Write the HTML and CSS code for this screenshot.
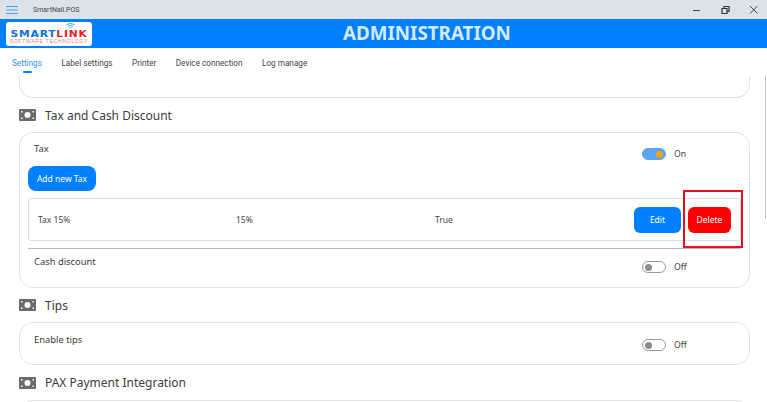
FILE: index.html
```html
<!DOCTYPE html>
<html lang="en">
<head>
<meta charset="utf-8">
<title>SmartNail.POS</title>
<link rel="stylesheet" href="styles.css">
</head>
<body>
<div class="app">
  <div class="titlebar">
    <svg class="menu-icon" width="14" height="10" viewBox="0 0 14 10"><path d="M1 1.500h12M1 5h12M1 8.500h12" stroke="#4d9fec" stroke-width="1.100" fill="none"/></svg>
    <span class="app-name">SmartNail.POS</span>
    <div class="win-controls">
      <svg width="10" height="10" viewBox="0 0 10 10"><path d="M0 5.500h7" stroke="#444" stroke-width="1" fill="none"/></svg>
      <svg width="10" height="10" viewBox="0 0 10 10"><path d="M1 3.500h5v5h-5zM3 3V1.500h5v5H6.500" stroke="#333" stroke-width="1.200" fill="none"/></svg>
      <svg width="10" height="10" viewBox="0 0 10 10"><path d="M1 1l7.500 7.500M8.500 1L1 8.500" stroke="#444" stroke-width="1" fill="none"/></svg>
    </div>
  </div>
  <header class="header">
    <div class="logo">
      <svg class="logo-wifi" width="9" height="6" viewBox="0 0 9 6"><path d="M0.500 1.500Q4.500 -0.500 8.500 1.500M2 3.200Q4.500 1.800 7 3.200M3.500 4.800Q4.500 4.200 5.500 4.800" stroke="#35a4e8" stroke-width="1" fill="none"/></svg>
      <div class="logo-main"><span class="logo-blue">SMART</span><span class="logo-red">LINK</span></div>
      <div class="logo-sub">SOFTWARE TECHNOLOGY</div>
    </div>
    <h1 class="header-title">ADMINISTRATION</h1>
  </header>
  <nav class="tabs">
    <a class="tab active">Settings</a>
    <a class="tab">Label settings</a>
    <a class="tab">Printer</a>
    <a class="tab">Device connection</a>
    <a class="tab">Log manage</a>
  </nav>
  <main class="content">
    <div class="card card-cut"></div>

    <div class="section-head">
      <svg class="money" width="17" height="12" viewBox="0 0 17 12"><path fill-rule="evenodd" fill="#6b6b6b" d="M1 0h15a1 1 0 0 1 1 1v10a1 1 0 0 1-1 1H1a1 1 0 0 1-1-1V1a1 1 0 0 1 1-1zM8.500 3a3 3 0 1 0 0 6a3 3 0 0 0 0-6zM2 2v1.500h1.500V2zM13.500 2v1.500H15V2zM2 8.500V10h1.500V8.500zM13.500 8.500V10H15V8.500z"/></svg>
      <h2 class="section-title">Tax and Cash Discount</h2>
    </div>
    <section class="card card-tax">
      <div class="setting-row tax-row">
        <span class="setting-label">Tax</span>
        <div class="toggle-wrap"><span class="toggle on"><i class="knob"></i></span><span class="toggle-text">On</span></div>
      </div>
      <button class="btn btn-blue btn-add">Add new Tax</button>
      <div class="tax-item">
        <span class="col col-name">Tax 15%</span>
        <span class="col col-rate">15%</span>
        <span class="col col-flag">True</span>
        <button class="btn btn-blue btn-edit">Edit</button>
        <button class="btn btn-red btn-delete">Delete</button>
      </div>
      <hr class="divider">
      <div class="setting-row cash-row">
        <span class="setting-label">Cash discount</span>
        <div class="toggle-wrap"><span class="toggle"><i class="knob"></i></span><span class="toggle-text">Off</span></div>
      </div>
    </section>

    <div class="section-head">
      <svg class="money" width="17" height="12" viewBox="0 0 17 12"><path fill-rule="evenodd" fill="#6b6b6b" d="M1 0h15a1 1 0 0 1 1 1v10a1 1 0 0 1-1 1H1a1 1 0 0 1-1-1V1a1 1 0 0 1 1-1zM8.500 3a3 3 0 1 0 0 6a3 3 0 0 0 0-6zM2 2v1.500h1.500V2zM13.500 2v1.500H15V2zM2 8.500V10h1.500V8.500zM13.500 8.500V10H15V8.500z"/></svg>
      <h2 class="section-title">Tips</h2>
    </div>
    <section class="card card-tips">
      <div class="setting-row tips-row">
        <span class="setting-label">Enable tips</span>
        <div class="toggle-wrap"><span class="toggle"><i class="knob"></i></span><span class="toggle-text">Off</span></div>
      </div>
    </section>

    <div class="section-head section-head-tall">
      <svg class="money" width="17" height="12" viewBox="0 0 17 12"><path fill-rule="evenodd" fill="#6b6b6b" d="M1 0h15a1 1 0 0 1 1 1v10a1 1 0 0 1-1 1H1a1 1 0 0 1-1-1V1a1 1 0 0 1 1-1zM8.500 3a3 3 0 1 0 0 6a3 3 0 0 0 0-6zM2 2v1.500h1.500V2zM13.500 2v1.500H15V2zM2 8.500V10h1.500V8.500zM13.500 8.500V10H15V8.500z"/></svg>
      <h2 class="section-title">PAX Payment Integration</h2>
    </div>
    <section class="card card-pax"></section>

    <div class="scroll-thumb"></div>
    <div class="highlight"></div>
  </main>
</div>
</body>
</html>
```
FILE: styles.css
```css
* { box-sizing: border-box; }
html, body { margin: 0; height: 100%; overflow: hidden; background: #fff; }
body { font-family: "Noto Sans", "Open Sans", sans-serif; color: #3c3c3c; }
.app { display: flex; flex-direction: column; height: 402px; width: 767px; }

.titlebar { height: 19px; flex: none; display: flex; align-items: center; background: #dbe3e9; padding-left: 5px; }
.menu-icon { flex: none; }
.app-name { font-family: Roboto, sans-serif; font-size: 7px; margin-left: 14px; color: #444; }
.win-controls { margin-left: auto; display: flex; align-items: center; gap: 18px; padding-right: 8px; }

.header { height: 29px; flex: none; background: #0080ff; display: flex; align-items: center; padding-left: 6px; }
.logo { flex: none; width: 86px; height: 24px; background: #fff; border-radius: 3px; position: relative; display: flex; flex-direction: column; align-items: center; padding-top: 7px; }
.logo-wifi { position: absolute; top: 1px; left: 60px; }
.logo-main { font-family: "DejaVu Sans", sans-serif; font-weight: 700; font-size: 9.500px; line-height: 9px; letter-spacing: .7px; transform: scaleX(1.130); }
.logo-blue { color: #0a73d9; }
.logo-red { color: #ee1c25; }
.logo-sub { font-family: "Liberation Sans", sans-serif; font-size: 5px; line-height: 6px; letter-spacing: .75px; color: #ee7a80; }
.header-title { flex: 1; margin: 0; padding-right: 5px; text-align: center; font-size: 18.800px; line-height: 29px; font-weight: 700; color: #d6eaff; }

.tabs { height: 28px; flex: none; display: flex; gap: 19.500px; padding: 0 0 0 12px; align-items: flex-start; position: relative; z-index: 1; background: #fff; }
.tab { font-family: Roboto, sans-serif; position: relative; font-size: 8.200px; line-height: 12px; padding-top: 9px; color: #444; }
.tab.active { color: #2f8fee; }
.tab.active::after { content: ""; position: absolute; left: 11px; top: 23px; width: 9px; height: 2px; background: #0080ff; border-radius: 1px; }

.content { flex: 1; min-height: 0; overflow: hidden; position: relative; padding: 0 17px 0 19px; }
.card { border: 1px solid #e2e2e2; border-radius: 14px; background: #fff; }
.card-cut { height: 22px; border-top: 0; border-top-left-radius: 0; border-top-right-radius: 0; }
.section-head { display: flex; align-items: center; gap: 9px; height: 34px; }
.section-head-tall { height: 35px; }
.section-head .money { flex: none; }
.section-title { margin: 0; font-size: 12px; font-weight: 400; color: #3c3c3c; }

.card-tax { height: 156px; padding: 0 8px; }
.card-tips { height: 43px; padding: 0 8px; }
.card-pax { height: 40px; }

.setting-row { display: flex; justify-content: space-between; padding-left: 6px; }
.setting-label { font-size: 9.400px; line-height: 13px; color: #3c3c3c; }
.tax-row { height: 33px; padding-top: 9px; }
.cash-row { padding-top: 6px; }
.tips-row { padding-top: 10px; }

.toggle-wrap { display: flex; align-items: center; gap: 8px; width: 99px; height: 12px; }
.tax-row .toggle-wrap { margin-top: 6px; }
.cash-row .toggle-wrap { margin-top: 6px; }
.tips-row .toggle-wrap { margin-top: 6px; }
.toggle { width: 24px; height: 12px; flex: none; border-radius: 6px; border: 1px solid #9a9a9a; background: #fff; display: flex; align-items: center; padding: 0 2px; }
.toggle .knob { width: 7px; height: 7px; border-radius: 50%; background: #8d8d8d; display: block; }
.toggle.on { background: #5ba4ee; border-color: #5ba4ee; justify-content: flex-end; }
.toggle.on .knob { background: #f5a20e; }
.toggle-text { font-size: 8.700px; color: #444; }

.btn { border: 0; font-family: inherit; color: #fff; height: 26px; border-radius: 6px; font-size: 8.500px; padding: 0; display: flex; align-items: center; justify-content: center; }
.btn-blue { background: #0080ff; }
.btn-red { background: #ff0000; }
.btn-add { width: 68px; height: 25px; border-radius: 8px; }
.tax-item { margin-top: 7px; height: 43px; border: 1px solid #dedede; border-radius: 3px; display: flex; align-items: center; padding-left: 9px; }
.col { font-size: 8.500px; color: #444; }
.col-name { width: 198px; }
.col-rate { width: 199px; }
.col-flag { flex: 1; }
.btn-edit { width: 47px; margin-right: 7px; }
.btn-delete { width: 43px; margin-right: 9px; }
.divider { margin: 7px 0 0; border: 0; border-top: 1px solid #b9b9b9; }

.scroll-thumb { position: absolute; right: 1px; top: 0; width: 1px; height: 143px; background: #c4c4c4; }
.highlight { position: absolute; left: 683px; top: 114px; width: 60px; height: 58px; border: 2px solid #e31021; pointer-events: none; }
```
